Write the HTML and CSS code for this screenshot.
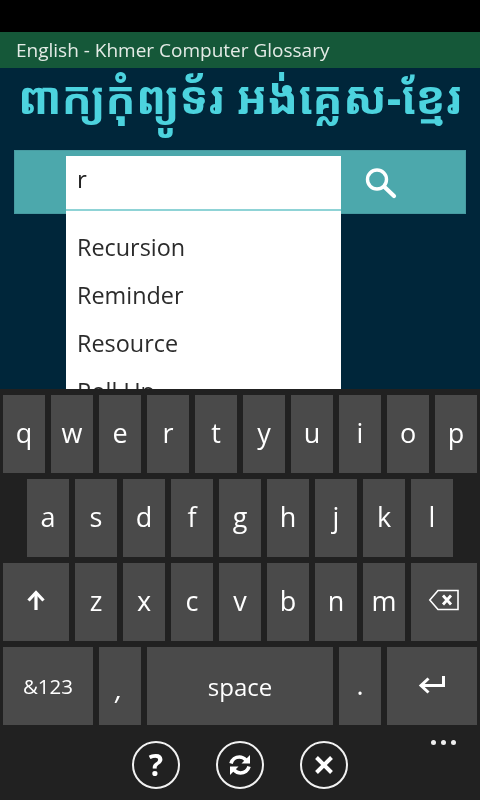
FILE: index.html
```html
<!DOCTYPE html>
<html lang="en">
<head>
<meta charset="utf-8">
<title>English - Khmer Computer Glossary</title>
<link rel="stylesheet" href="styles.css">
</head>
<body>
<div class="screen">
  <div class="status"></div>
  <div class="titlebar">English - Khmer Computer Glossary</div>
  <main class="content">
    <h1 class="heading" lang="km">ពាក្យកុំព្យូទ័រ អង់គ្លេស-ខ្មែរ</h1>
    <div class="searchbar">
      <div class="field">
        <div class="input">r</div>
        <ul class="suggest">
          <li>Recursion</li>
          <li>Reminder</li>
          <li>Resource</li>
          <li>Roll Up</li>
        </ul>
      </div>
      <div class="searchbtn">
        <svg width="36" height="36" viewBox="0 0 36 36" fill="none" stroke="#fff" stroke-linecap="round">
          <circle cx="14" cy="13.500" r="9.500" stroke-width="3.400"/>
          <path d="M21.500 21l9.500 9" stroke-width="4.200"/>
        </svg>
      </div>
    </div>
  </main>
  <section class="keyboard">
    <div class="row">
      <div class="key">q</div><div class="key">w</div><div class="key">e</div><div class="key">r</div><div class="key">t</div><div class="key">y</div><div class="key">u</div><div class="key">i</div><div class="key">o</div><div class="key">p</div>
    </div>
    <div class="row row-home">
      <div class="key">a</div><div class="key">s</div><div class="key">d</div><div class="key">f</div><div class="key">g</div><div class="key">h</div><div class="key">j</div><div class="key">k</div><div class="key">l</div>
    </div>
    <div class="row">
      <div class="key key-side">
        <svg width="22" height="22" viewBox="0 0 22 22" fill="none" stroke="#fff" stroke-width="3.200"><path d="M11 21V4"/><path d="M3.500 11.500L11 3.500l7.500 8"/></svg>
      </div>
      <div class="key">z</div><div class="key">x</div><div class="key">c</div><div class="key">v</div><div class="key">b</div><div class="key">n</div><div class="key">m</div>
      <div class="key key-side">
        <svg width="32" height="22" viewBox="0 0 32 22" fill="none" stroke="#fff"><path d="M30 1.500H10L1.800 11 10 20.500h20z" stroke-width="1.600"/><path d="M15 6.500l8 9M23 6.500l-8 9" stroke-width="2.800"/></svg>
      </div>
    </div>
    <div class="row">
      <div class="key key-wide key-num">&amp;123</div>
      <div class="key key-punct key-comma">,</div>
      <div class="key key-space">space</div>
      <div class="key key-punct">.</div>
      <div class="key key-wide key-enter">
        <svg width="28" height="20" viewBox="0 0 28 20" fill="none" stroke="#fff" stroke-width="3"><path d="M25.500 0v9.500H4"/><path d="M10.500 2.500L3 9.500l7.500 7"/></svg>
      </div>
    </div>
  </section>
  <nav class="appbar">
    <div class="round">
      <span class="round-q">?</span>
    </div>
    <div class="round">
      <svg width="26" height="26" viewBox="0 0 26 26" fill="none" stroke="#fff" stroke-width="3.600"><path d="M4 11.500C5 7.500 8.500 5 12.500 5c2.500 0 4.500 1 6.500 3"/><path d="M22 14.500c-1 4-4.500 6.500-8.500 6.500-2.500 0-4.500-1-6.500-3"/><path d="M23 3v8.500h-8.500z" fill="#fff" stroke="none"/><path d="M3 23v-8.500h8.500z" fill="#fff" stroke="none"/></svg>
    </div>
    <div class="round">
      <svg width="24" height="24" viewBox="0 0 24 24" fill="none" stroke="#fff" stroke-width="4"><path d="M4.500 4.500l15 15M19.500 4.500l-15 15"/></svg>
    </div>
    <div class="dots"><i></i><i></i><i></i></div>
  </nav>
</div>
</body>
</html>
```
FILE: styles.css
```css
* { box-sizing: border-box; }
html, body { margin: 0; padding: 0; }
body { width: 480px; height: 800px; overflow: hidden; font-family: "Open Sans", "Noto Sans", sans-serif; }
.screen { width: 480px; height: 800px; display: flex; flex-direction: column; background: #00263a; overflow: hidden; filter: blur(0.4px); }
.status { height: 32px; background: #000; flex: none; }
.titlebar { height: 36px; flex: none; background: #155839; color: #e4ebe6; font-size: 19px; line-height: 36px; padding-left: 16px; }
.content { flex: 1; min-height: 0; position: relative; display: flex; flex-direction: column; align-items: center; }
.heading { margin: 0; height: 82px; font-size: 45px; font-weight: 700; line-height: 58px; color: #4cd3de; text-align: center; white-space: nowrap; font-family: "Noto Sans Khmer", "Khmer OS", "DejaVu Sans", "Noto Sans", sans-serif; }
.searchbar { width: 452px; height: 64px; background: #4ca8ac; border: 1px solid #479ba1; display: flex; padding-left: 51px; padding-top: 5px; flex: none; }
.field { width: 275px; position: relative; flex: none; }
.input { height: 55px; background: #fff; border-bottom: 2px solid #8fd3d6; color: #222; font-size: 24px; line-height: 46px; padding-left: 11px; }
.suggest { position: absolute; left: 0; top: 55px; width: 275px; height: 178px; margin: 0; padding: 12px 0 0 11px; list-style: none; background: #fff; color: #2b2b2b; font-size: 23.400px; overflow: hidden; }
.suggest li { height: 48px; line-height: 48px; }
.searchbtn { flex: 1; display: flex; padding: 10px 0 0 22px; }
.keyboard { height: 336px; flex: none; background: #212121; padding: 6px 3px 0; display: flex; flex-direction: column; gap: 6px; position: relative; }
.row { display: flex; gap: 6px; height: 78px; }
.row-home { padding-left: 24px; }
.key { width: 42px; height: 78px; background: #4a4a4a; color: #fff; display: flex; align-items: center; justify-content: center; font-size: 27px; padding-bottom: 4px; flex: none; }
.key-side { width: 66px; }
.key-wide { width: 90px; }
.key-space { width: 186px; font-size: 24px; padding-bottom: 0; }
.key-num { font-size: 20.500px; padding-bottom: 0; }
.key-enter { padding-bottom: 0; }
.key-punct { align-items: flex-end; padding-bottom: 22px; }
.key-comma { font-style: italic; padding-right: 2px; padding-bottom: 18px; }
.appbar { height: 75px; flex: none; background: #212121; position: relative; display: flex; justify-content: center; gap: 36px; padding-top: 16px; }
.round { width: 48px; height: 48px; border: 2.500px solid #f2f2f2; border-radius: 50%; display: flex; align-items: center; justify-content: center; color: #fff; }
.round-q { font-size: 30px; font-weight: 700; line-height: 1; }
.dots { position: absolute; right: 24px; top: 15px; display: flex; gap: 5px; }
.dots i { width: 5px; height: 5px; border-radius: 50%; background: #eee; }
```
